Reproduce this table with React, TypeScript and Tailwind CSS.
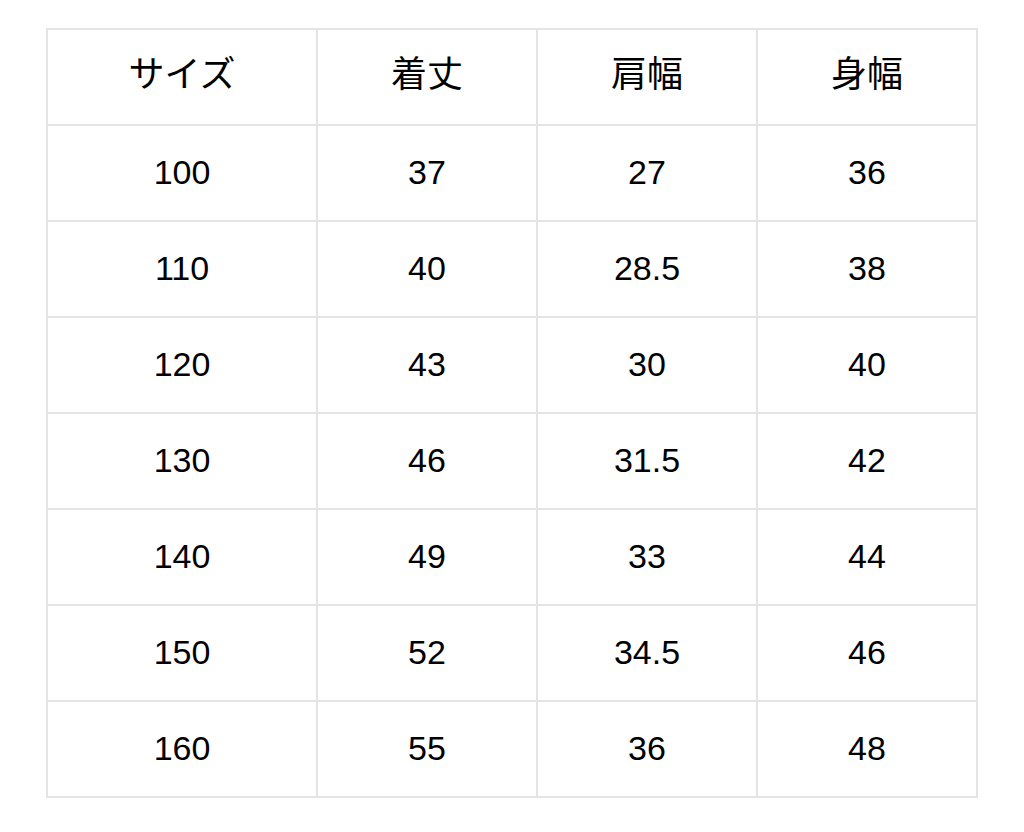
const headers = ['サイズ', '着丈', '肩幅', '身幅'];

const rows = [
  ['100', '37', '27', '36'],
  ['110', '40', '28.5', '38'],
  ['120', '43', '30', '40'],
  ['130', '46', '31.5', '42'],
  ['140', '49', '33', '44'],
  ['150', '52', '34.5', '46'],
  ['160', '55', '36', '48'],
];

export default function App() {
  return (
    <main className="min-h-screen bg-white pt-[28px] pl-[46px] font-['Liberation_Sans','Noto_Sans_CJK_JP',sans-serif] text-black">
      <table className="table-fixed border-collapse w-[932px] text-[34px]">
        <colgroup>
          <col className="w-[270px]" />
          <col className="w-[220px]" />
          <col className="w-[220px]" />
          <col className="w-[220px]" />
        </colgroup>
        <thead>
          <tr className="h-[96px]">
            {headers.map((h) => (
              <th key={h} className="border-2 border-[#e4e4e4] text-center font-normal text-[36px] leading-none pb-[4px]">
                {h}
              </th>
            ))}
          </tr>
        </thead>
        <tbody>
          {rows.map((r) => (
            <tr key={r[0]} className="h-[96px]">
              {r.map((v, i) => (
                <td key={i} className="border-2 border-[#e4e4e4] text-center leading-none pb-[3px]">
                  {v}
                </td>
              ))}
            </tr>
          ))}
        </tbody>
      </table>
    </main>
  );
}
